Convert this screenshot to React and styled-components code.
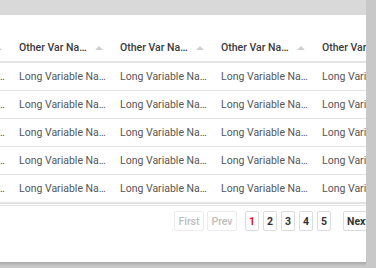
import React, { useLayoutEffect, useRef } from 'react';
import styled, { createGlobalStyle } from 'styled-components';

const GlobalStyle = createGlobalStyle`
  html, body {
    margin: 0;
    padding: 0;
    background: #c8c8c8;
    font-family: Roboto, "Liberation Sans", sans-serif;
  }
`;

const columns = ['Other Var Name', 'Other Var Name', 'Other Var Name', 'Other Var Name', 'Other Var Name', 'Other Var Name'];
const rows = [0, 1, 2, 3, 4];
const pages = [1, 2, 3, 4, 5];

class App extends React.Component {
  render() {
    return (
      <Page>
        <GlobalStyle />
        <Main>
          <TopBar />
          <Panel>
            <TableArea />
            <Pagination>
              <PageButton disabled>First</PageButton>
              <PageButton disabled>Prev</PageButton>
              <Numbers>
                {pages.map(p => (
                  <NumButton key={p} active={p === 1}>{p}</NumButton>
                ))}
              </Numbers>
              <PageButton>Next</PageButton>
              <PageButton>Last</PageButton>
            </Pagination>
          </Panel>
          <BottomShade />
        </Main>
        <SideStrip />
      </Page>
    );
  }
}

// table is scrolled horizontally, like the reference
function TableArea() {
  const ref = useRef(null);
  useLayoutEffect(() => {
    if (ref.current) ref.current.scrollLeft = 89;
  }, []);
  return (
    <Scroller ref={ref}>
      <Table>
        <HeadRow>
          {columns.map((c, i) => (
            <HeadCell key={i}>
              <HeadText>{c}</HeadText>
              <SortArrow />
            </HeadCell>
          ))}
        </HeadRow>
        {rows.map(r => (
          <Row key={r}>
            {columns.map((c, i) => (
              <Cell key={i}>Long Variable Name</Cell>
            ))}
          </Row>
        ))}
      </Table>
    </Scroller>
  );
}

var Page = styled.div`
  display: flex;
  width: 376px;
  height: 268px;
  overflow: hidden;
`;
var Main = styled.div`
  width: 366px;
  display: flex;
  flex-direction: column;
`;
var TopBar = styled.div`
  height: 15px;
  background: #d9d9d9;
  flex: none;
`;
var Panel = styled.div`
  background: #fff;
  height: 247px;
  flex: none;
  padding-top: 19px;
  box-sizing: border-box;
  overflow: hidden;
`;
var BottomShade = styled.div`
  flex: 1;
  background: linear-gradient(#a8a8a8, #c8c8c8 4px);
`;
var SideStrip = styled.div`
  width: 10px;
  background: #c8c8c8;
`;
var Scroller = styled.div`
  overflow-x: auto;
  scrollbar-width: none;
  &::-webkit-scrollbar { display: none; }
`;
var Table = styled.div`
  display: inline-block;
  border-bottom: 1px solid #e2e2e2;
`;
var HeadRow = styled.div`
  display: flex;
  height: 29px;
  border-bottom: 2px solid #e4e4e4;
  box-sizing: border-box;
`;
var HeadCell = styled.div`
  width: 101px;
  flex: none;
  display: flex;
  align-items: center;
  padding: 0 10px 0 7px;
  box-sizing: border-box;
`;
var HeadText = styled.div`
  flex: 1;
  min-width: 0;
  white-space: nowrap;
  overflow: hidden;
  text-overflow: ellipsis;
  font-size: 10.5px;
  font-weight: 500;
  color: #3a3a3a;
`;
var SortArrow = styled.div`
  margin-left: 5px;
  flex: none;
  width: 0;
  height: 0;
  border-left: 4px solid transparent;
  border-right: 4px solid transparent;
  border-bottom: 4px solid #cfcfcf;
`;
var Row = styled.div`
  display: flex;
  height: 28px;
  border-bottom: 1px solid #e4e4e4;
  box-sizing: border-box;
`;
var Cell = styled.div`
  width: 101px;
  flex: none;
  padding: 0 7px;
  box-sizing: border-box;
  line-height: 27px;
  font-size: 10.5px;
  color: #555;
  white-space: nowrap;
  overflow: hidden;
  text-overflow: ellipsis;
`;
var Pagination = styled.div`
  display: flex;
  align-items: center;
  gap: 3px;
  padding: 5px 0 0 174px;
  border-top: 1px solid #e4e4e4;
  margin-top: 1px;
  white-space: nowrap;
`;
var Numbers = styled.div`
  display: flex;
  gap: 4px;
  margin: 0 9px 0 5px;
`;
var PageButton = styled.button`
  height: 20px;
  width: 30px;
  flex: none;
  padding: 0;
  font-family: inherit;
  font-size: 10.5px;
  font-weight: ${p => (p.disabled ? 500 : 700)};
  background: #fff;
  border: 1px solid ${p => (p.disabled ? '#ececec' : '#dcdcdc')};
  border-radius: 2px;
  color: ${p => (p.disabled ? '#bdbdbd' : '#333')};
`;
var NumButton = styled.button`
  height: 20px;
  width: 14px;
  padding: 0;
  font-family: inherit;
  font-size: 10.5px;
  font-weight: 700;
  background: #fff;
  border: 1px solid #dcdcdc;
  border-radius: 2px;
  color: ${p => (p.active ? '#e01010' : '#333')};
`;

export default App;
